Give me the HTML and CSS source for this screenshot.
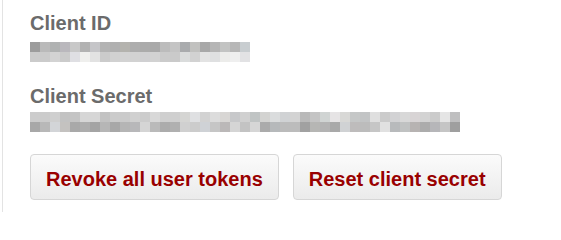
FILE: index.html
```html
<!DOCTYPE html>
<html lang="en">
<head>
<meta charset="utf-8">
<title>OAuth application</title>
<link rel="stylesheet" href="styles.css">
</head>
<body>
<div class="panel">
  <dl class="keys">
    <div class="field field-id">
      <dt class="label">Client ID</dt>
      <dd class="pix pix-id" aria-label="redacted">
        <i style="background:#9c9c9c"></i><i style="background:#bababa"></i><i style="background:#b0b2b2"></i><i style="background:#bab8bd"></i><i style="background:#c8c8c8"></i><i style="background:#b2b2b2"></i><i style="background:#c5c5c8"></i><i style="background:#b3b3b3"></i><i style="background:#b0b0b0"></i><i style="background:#b4b3ae"></i><i style="background:#adadad"></i><i style="background:#ababab"></i><i style="background:#a9a9a9"></i><i style="background:#bcbcbc"></i><i style="background:#c4c4c4"></i><i style="background:#a9abad"></i><i style="background:#c1c1bf"></i><i style="background:#a8a8a8"></i><i style="background:#b5b5b5"></i><i style="background:#c2c3c2"></i><i style="background:#b7b7b7"></i><i style="background:#c8cdd0"></i>
        <i style="background:#cbcbcb"></i><i style="background:#cbcbcb"></i><i style="background:#d3d3d3"></i><i style="background:#cbcbcb"></i><i style="background:#dfdfe3"></i><i style="background:#efefed"></i><i style="background:#e2e2e2"></i><i style="background:#cbcbcb"></i><i style="background:#d1d1d1"></i><i style="background:#d3d3d3"></i><i style="background:#d2d2d2"></i><i style="background:#d0d0d2"></i><i style="background:#d2d2d2"></i><i style="background:#cbcbcb"></i><i style="background:#cacaca"></i><i style="background:#dadcdc"></i><i style="background:#d2d2d2"></i><i style="background:#e3e3e3"></i><i style="background:#dfe0e1"></i><i style="background:#ececea"></i><i style="background:#efefef"></i><i style="background:#e2e2e4"></i>
      </dd>
    </div>
    <div class="field field-secret">
      <dt class="label">Client Secret</dt>
      <dd class="pix pix-secret" aria-label="redacted">
        <i style="background:#cccccc"></i><i style="background:#cbcbcb"></i><i style="background:#cfcfcf"></i><i style="background:#c2c2c2"></i><i style="background:#c4c4c4"></i><i style="background:#d6d6d6"></i><i style="background:#d6d6d6"></i><i style="background:#c2c2c2"></i><i style="background:#cbcbcb"></i><i style="background:#cacaca"></i><i style="background:#d0d0d0"></i><i style="background:#cccccc"></i><i style="background:#d8d8d8"></i><i style="background:#cfcfcf"></i><i style="background:#cfcfcf"></i><i style="background:#d5d5d3"></i><i style="background:#dfe0e2"></i><i style="background:#d2d2d2"></i><i style="background:#dcdcdc"></i><i style="background:#d8d6d4"></i><i style="background:#c7c8ca"></i><i style="background:#d0d0d0"></i><i style="background:#c0c4c4"></i><i style="background:#d3d3d1"></i><i style="background:#dadcdd"></i><i style="background:#d0d2d4"></i><i style="background:#d3d3d3"></i><i style="background:#b9b9b9"></i><i style="background:#c4c4c4"></i><i style="background:#d0d4d3"></i><i style="background:#e6e4e5"></i><i style="background:#d8d8d6"></i><i style="background:#c5c7c7"></i><i style="background:#c2c4c5"></i><i style="background:#dfdfdf"></i><i style="background:#cbcbcb"></i><i style="background:#d2d2d4"></i><i style="background:#d8d8d8"></i><i style="background:#d8d4d5"></i><i style="background:#d3d3d3"></i><i style="background:#cbcbcb"></i><i style="background:#e5e5e5"></i><i style="background:#bfbfc0"></i>
        <i style="background:#a8a8a8"></i><i style="background:#b8b8b8"></i><i style="background:#d3d5d8"></i><i style="background:#c4c2c0"></i><i style="background:#a9a9a9"></i><i style="background:#adadad"></i><i style="background:#a4a4a4"></i><i style="background:#b6b6b6"></i><i style="background:#a8a8a8"></i><i style="background:#b5b5b5"></i><i style="background:#b8b8ba"></i><i style="background:#d5d5d5"></i><i style="background:#bababa"></i><i style="background:#acacac"></i><i style="background:#b0b0b0"></i><i style="background:#d0d0d0"></i><i style="background:#cccccc"></i><i style="background:#cfd2d6"></i><i style="background:#c6c6c6"></i><i style="background:#bbb8b8"></i><i style="background:#d5d5d5"></i><i style="background:#c3c3c3"></i><i style="background:#d6d6d6"></i><i style="background:#ababab"></i><i style="background:#b6b9bb"></i><i style="background:#bbbbbb"></i><i style="background:#bcbcbc"></i><i style="background:#a1a1a1"></i><i style="background:#b6b6b4"></i><i style="background:#b3b3b3"></i><i style="background:#a9a9a9"></i><i style="background:#d0d2d4"></i><i style="background:#bebcbc"></i><i style="background:#bcbcbc"></i><i style="background:#c6c6c6"></i><i style="background:#e1e1e1"></i><i style="background:#b8babc"></i><i style="background:#c0c2c2"></i><i style="background:#b7b3b2"></i><i style="background:#acacac"></i><i style="background:#b6b6b9"></i><i style="background:#c5c5c5"></i><i style="background:#9f9f9f"></i>
      </dd>
    </div>
  </dl>
  <div class="actions">
    <button class="btn btn-danger" type="button">Revoke all user tokens</button>
    <button class="btn btn-danger" type="button">Reset client secret</button>
  </div>
</div>
</body>
</html>
```

FILE: styles.css
```css
html, body {
  margin: 0;
  padding: 0;
  background: #ffffff;
}

body {
  font-family: "Liberation Sans", Arial, Helvetica, sans-serif;
  width: 561px;
  height: 212px;
  overflow: hidden;
}

.panel {
  margin-left: 2px;
  border-left: 1px solid #e3e3e3;
  height: 212px;
  box-sizing: border-box;
  padding: 11px 0 0 27px;
}

.keys {
  margin: 0;
  padding: 0;
}

.field {
  margin: 0;
}

.field-secret {
  margin-top: 22px;
}

.label {
  margin: 0;
  font-weight: bold;
  font-size: 20px;
  line-height: 24px;
  color: #6b6b6b;
}

.pix {
  margin: 0;
  display: grid;
  grid-auto-rows: 10px;
}

.pix i {
  display: block;
}

.pix-id {
  margin-top: 7px;
  grid-template-columns: repeat(22, 10px);
}

.pix-secret {
  margin-top: 4px;
  grid-template-columns: repeat(43, 10px);
}

.actions {
  margin-top: 22px;
  display: flex;
  gap: 14px;
}

.btn {
  height: 46px;
  box-sizing: border-box;
  margin: 0;
  padding: 4px 15px 0;
  border: 1px solid #d6d6d6;
  border-radius: 4px;
  background: linear-gradient(#fbfbfb, #ebebeb);
  font-family: "Liberation Sans", Arial, Helvetica, sans-serif;
  font-weight: bold;
  font-size: 20px;
  line-height: 24px;
  cursor: pointer;
}

.btn-danger {
  color: #990000;
}
```
